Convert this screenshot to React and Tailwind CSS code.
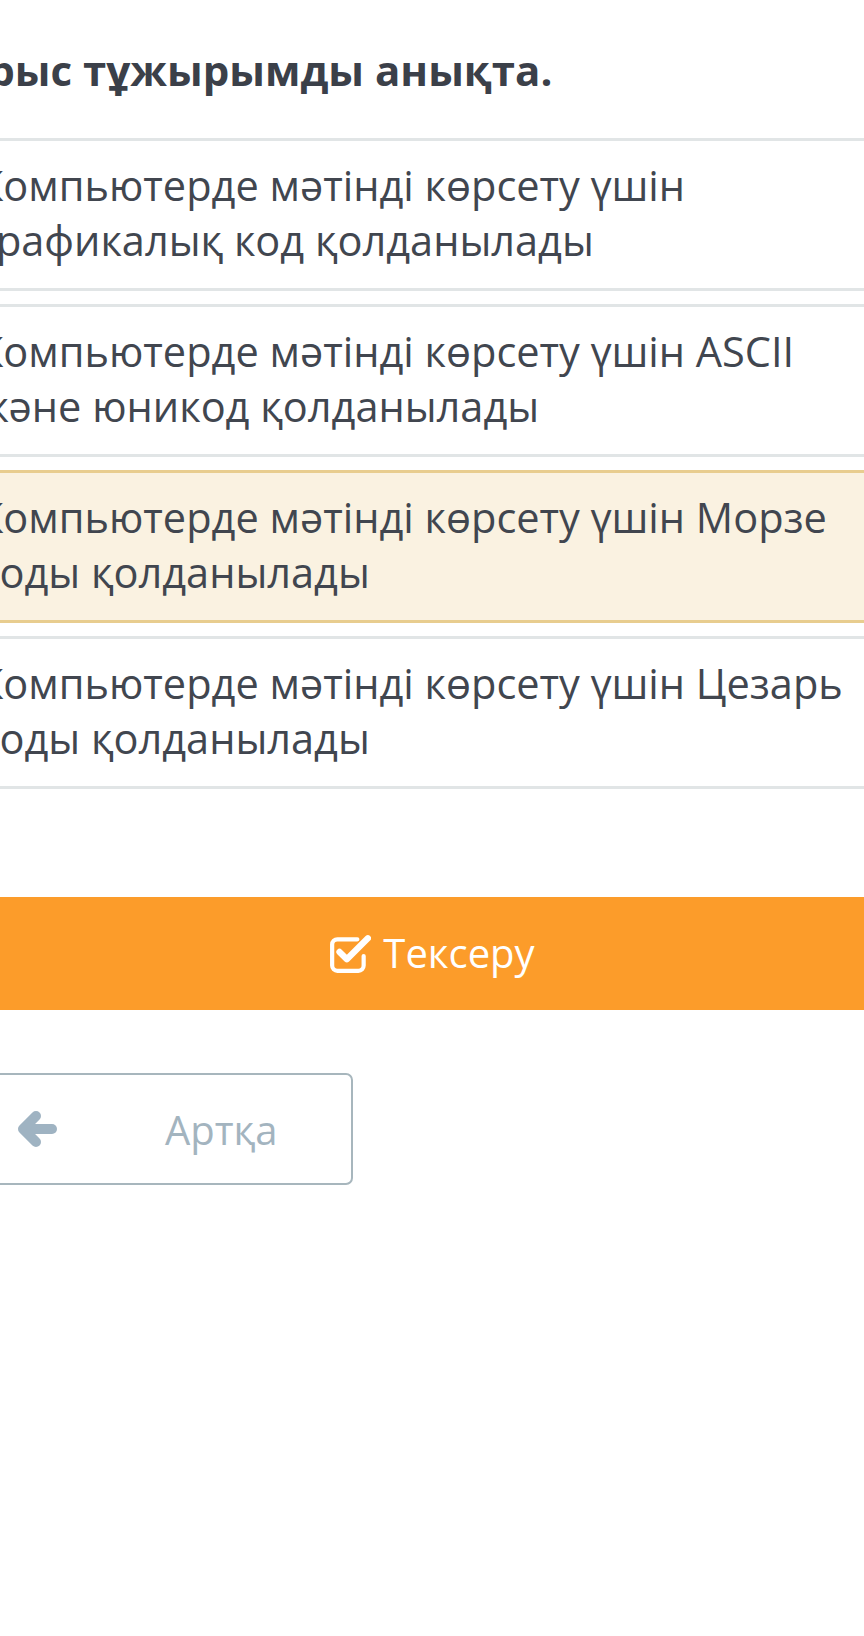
import React from 'react';

const options = [
    { id: 1, lines: ['Компьютерде мәтінді көрсету үшін', 'графикалық код қолданылады'] },
    { id: 2, lines: ['Компьютерде мәтінді көрсету үшін ASCII', 'және юникод қолданылады'] },
    { id: 3, lines: ['Компьютерде мәтінді көрсету үшін Морзе', 'коды қолданылады'], selected: true },
    { id: 4, lines: ['Компьютерде мәтінді көрсету үшін Цезарь', 'коды қолданылады'] },
];

function CheckSquareIcon() {
    return (
        <svg width="42" height="40" viewBox="0 0 40 38" fill="none">
            <path d="M27 5H8a5 5 0 0 0-5 5v20a5 5 0 0 0 5 5h20a5 5 0 0 0 5-5v-9" stroke="white" strokeWidth="4" strokeLinecap="round" />
            <path d="M10 17l7 7L37 4" stroke="white" strokeWidth="6" strokeLinecap="round" strokeLinejoin="round" />
        </svg>
    );
}

function ArrowLeftIcon() {
    return (
        <svg width="40" height="36" viewBox="0 0 40 36" fill="none">
            <path d="M35 18H8" stroke="#9fb3c2" strokeWidth="10" strokeLinecap="round" />
            <path d="M19 5L6 18l13 13" stroke="#9fb3c2" strokeWidth="10" strokeLinecap="round" strokeLinejoin="round" />
        </svg>
    );
}

export default function App() {
    return (
        <div className="w-[864px] h-[1636px] overflow-hidden bg-white font-['Open_Sans',sans-serif]">
            <div className="-ml-[50px] w-[964px]">
                <h1 className="-ml-[18px] pt-[42px] text-[42px] leading-[55px] font-bold text-[#3b4049] whitespace-nowrap">
                    Дұрыс тұжырымды анықта.
                </h1>

                <div className="mt-[41px] flex flex-col gap-[13px]">
                    {options.map((option) => (
                        <div
                            key={option.id}
                            className={
                                option.selected
                                    ? 'h-[153px] border-y-[3px] border-[#e8cd8f] bg-[#faf2e1] pl-[28px] pt-[17px]'
                                    : 'h-[153px] border-y-[3px] border-[#e1e5e6] bg-white pl-[28px] pt-[17px]'
                            }
                        >
                            <p className="text-[41.5px] leading-[55px] text-[#41464f] whitespace-nowrap">
                                {option.lines[0]}
                                <br />
                                {option.lines[1]}
                            </p>
                        </div>
                    ))}
                </div>

                <button className="mt-[108px] flex h-[113px] w-full items-center justify-center gap-[12px] bg-[#fc9c2a] text-white">
                    <CheckSquareIcon />
                    <span className="text-[40px] leading-[55px] pb-[2px]">Тексеру</span>
                </button>

                <button className="mt-[63px] flex h-[112px] w-[403px] items-center rounded-[7px] border-2 border-[#a7b6bd] bg-white pl-[65px]">
                    <ArrowLeftIcon />
                    <span className="ml-[108px] text-[40px] leading-[55px] text-[#a3b4bf]">Артқа</span>
                </button>
            </div>
        </div>
    );
}
